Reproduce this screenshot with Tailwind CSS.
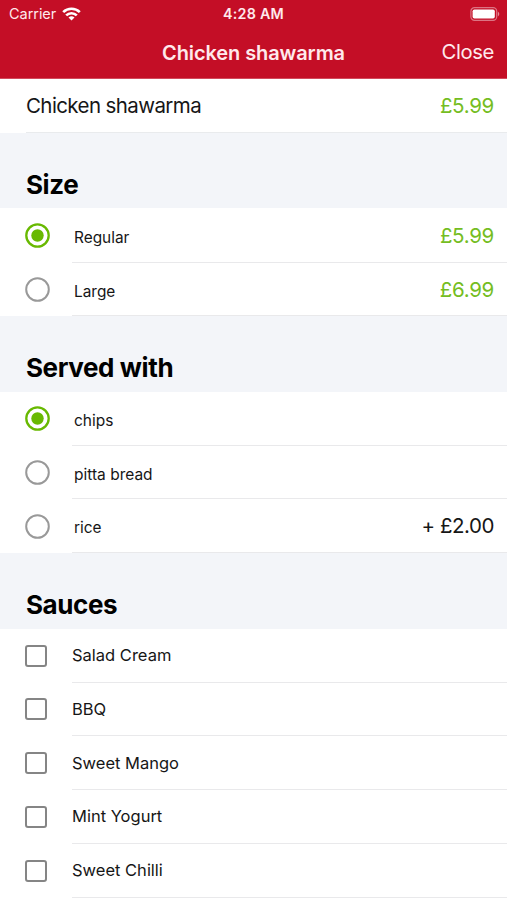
<!DOCTYPE html>
<html lang="en">
<head>
<meta charset="utf-8">
<title>Chicken shawarma</title>
<script src="https://cdn.jsdelivr.net/npm/@tailwindcss/browser@4"></script>
</head>
<body class="w-[507px] h-[900px] overflow-hidden bg-white text-[#161616] font-[Inter,sans-serif]">
<header class="h-[79px] bg-[#c40e26] text-[#ffe9ec] border-b border-[#d24a5c]">
  <div class="h-[27px] grid grid-cols-3 items-center pl-[9px] pr-[7px]">
    <div class="flex items-center gap-[6px] text-[14.5px] leading-[27px]"><span class="tracking-[-0.05px]">Carrier</span>
      <svg class="w-[19px] h-[14px]" viewBox="0 0 19 14" fill="none" stroke="#ffffff" stroke-width="2.7"><path d="M1.2 5.1a12 12 0 0 1 16.6 0"/><path d="M4.2 8.4a7.6 7.6 0 0 1 10.6 0"/><path d="M9.5 13.6 6.5 10.6a4.3 4.3 0 0 1 6 0Z" fill="#ffffff" stroke="none"/></svg>
    </div>
    <div class="text-center text-[14.3px] font-semibold tracking-[0.25px] whitespace-nowrap pr-[2px]">4:28 AM</div>
    <svg class="justify-self-end w-[30px] h-[14px]" viewBox="0 0 30 14"><rect x=".9" y=".7" width="25.8" height="12.6" rx="3.6" fill="none" stroke="#dc7483" stroke-width="1.2"/><rect x="2.6" y="2.5" width="22.2" height="9" rx="1.8" fill="#fff"/><path d="M27.9 4.6q2.8 2.4 0 4.8Z" fill="#e48b98"/></svg>
  </div>
  <div class="h-[51px] grid grid-cols-[1fr_auto_1fr] items-center pr-[13px] pl-[13px]">
    <h1 class="col-start-2 text-[20px] font-semibold tracking-[-0.1px]">Chicken shawarma</h1>
    <span class="justify-self-end text-[20.3px] tracking-[-0.4px]">Close</span>
  </div>
</header>
<main>
  <div class="h-[54px] flex flex-col justify-end">
    <div class="flex-1 flex items-center justify-between pt-px pl-[26px] pr-[13px] text-[20.5px]"><span class="tracking-[-0.6px]">Chicken shawarma</span><span class="text-[#74bd22] tracking-[-0.3px]">£5.99</span></div>
    <div class="h-px ml-[26px] bg-[#e9ebed]"></div>
  </div>

  <h2 class="h-[75px] pt-[33px] pl-[26px] bg-[#f3f5f9] text-black text-[26px] leading-[38px] font-bold tracking-[-0.4px]">Size</h2>
  <div class="h-[55px] pl-[25px] flex">
    <svg class="w-[25px] h-[25px] mt-[15px] shrink-0" viewBox="0 0 25 25"><circle cx="12.5" cy="12.5" r="11.2" fill="none" stroke="#68b901" stroke-width="2.3"/><circle cx="12.5" cy="12.5" r="6.2" fill="#68b901"/></svg>
    <div class="ml-[22px] flex-1 border-b border-[#e9e9eb] flex justify-between pl-[2px] pr-[13px]"><span class="text-[15.4px] leading-[59px]">Regular</span><span class="text-[20.5px] leading-[56px] tracking-[-0.3px] text-[#74bd22]">£5.99</span></div>
  </div>
  <div class="h-[53px] pl-[25px] flex">
    <svg class="w-[25px] h-[25px] mt-[14px] shrink-0" viewBox="0 0 25 25"><circle cx="12.5" cy="12.5" r="11.3" fill="none" stroke="#999" stroke-width="2"/></svg>
    <div class="ml-[22px] flex-1 border-b border-[#e9e9eb] flex justify-between pl-[2px] pr-[13px]"><span class="text-[15.4px] leading-[57px]">Large</span><span class="text-[20.5px] leading-[54px] tracking-[-0.3px] text-[#74bd22]">£6.99</span></div>
  </div>

  <h2 class="h-[76px] pt-[33px] pl-[26px] bg-[#f3f5f9] text-black text-[26px] leading-[38px] font-bold tracking-[-0.4px]">Served with</h2>
  <div class="h-[54px] pl-[25px] flex">
    <svg class="w-[25px] h-[25px] mt-[14px] shrink-0" viewBox="0 0 25 25"><circle cx="12.5" cy="12.5" r="11.2" fill="none" stroke="#68b901" stroke-width="2.3"/><circle cx="12.5" cy="12.5" r="6.2" fill="#68b901"/></svg>
    <div class="ml-[22px] flex-1 border-b border-[#e9e9eb] pl-[2px]"><span class="block text-[15.5px] leading-[57px]">chips</span></div>
  </div>
  <div class="h-[53px] pl-[25px] flex">
    <svg class="w-[25px] h-[25px] mt-[14px] shrink-0" viewBox="0 0 25 25"><circle cx="12.5" cy="12.5" r="11.3" fill="none" stroke="#999" stroke-width="2"/></svg>
    <div class="ml-[22px] flex-1 border-b border-[#e9e9eb] pl-[2px]"><span class="block text-[15.5px] leading-[57px]">pitta bread</span></div>
  </div>
  <div class="h-[54px] pl-[25px] flex">
    <svg class="w-[25px] h-[25px] mt-[15px] shrink-0" viewBox="0 0 25 25"><circle cx="12.5" cy="12.5" r="11.3" fill="none" stroke="#999" stroke-width="2"/></svg>
    <div class="ml-[22px] flex-1 border-b border-[#e9e9eb] flex justify-between pl-[2px] pr-[13px]"><span class="text-[15.4px] leading-[57px]">rice</span><span class="text-[20.5px] leading-[54px] tracking-[-0.45px]">+ £2.00</span></div>
  </div>

  <h2 class="h-[76px] pt-[33px] pl-[26px] bg-[#f3f5f9] text-black text-[26px] leading-[38px] font-bold tracking-[-0.4px]">Sauces</h2>
  <div class="h-[54px] pl-[25px] flex">
    <div class="size-[22px] mt-[16px] border-2 border-[#858585] rounded-[3px] shrink-0"></div>
    <div class="ml-[25px] flex-1 border-b border-[#e9e9eb] text-[16.5px] leading-[53px]">Salad Cream</div>
  </div>
  <div class="h-[53px] pl-[25px] flex">
    <div class="size-[22px] mt-[15px] border-2 border-[#858585] rounded-[3px] shrink-0"></div>
    <div class="ml-[25px] flex-1 border-b border-[#e9e9eb] text-[16.5px] leading-[52px]">BBQ</div>
  </div>
  <div class="h-[54px] pl-[25px] flex">
    <div class="size-[22px] mt-[16px] border-2 border-[#858585] rounded-[3px] shrink-0"></div>
    <div class="ml-[25px] flex-1 border-b border-[#e9e9eb] text-[16.5px] leading-[54px]">Sweet Mango</div>
  </div>
  <div class="h-[54px] pl-[25px] flex">
    <div class="size-[22px] mt-[16px] border-2 border-[#858585] rounded-[3px] shrink-0"></div>
    <div class="ml-[25px] flex-1 border-b border-[#e9e9eb] text-[16.5px] leading-[53px]">Mint Yogurt</div>
  </div>
  <div class="h-[54px] pl-[25px] flex">
    <div class="size-[22px] mt-[16px] border-2 border-[#858585] rounded-[3px] shrink-0"></div>
    <div class="ml-[25px] flex-1 border-b border-[#e9e9eb] text-[16.5px] leading-[53px]">Sweet Chilli</div>
  </div>
</main>
</body>
</html>
